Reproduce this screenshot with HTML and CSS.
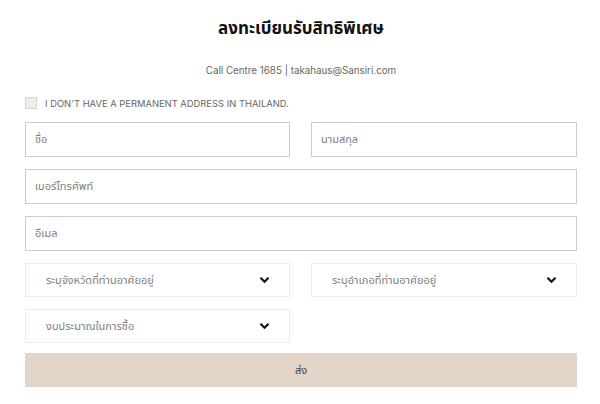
FILE: index.html
```html
<!DOCTYPE html>
<html lang="th">
<head>
<meta charset="utf-8">
<link rel="stylesheet" href="styles.css">
</head>
<body>
<div class="page">
  <h1 class="title">ลงทะเบียนรับสิทธิพิเศษ</h1>
  <p class="contact">Call Centre 1685 | takahaus@Sansiri.com</p>
  <form class="form">
    <label class="check-row">
      <span class="checkbox"></span>
      <span class="check-label">I DON'T HAVE A PERMANENT ADDRESS IN THAILAND.</span>
    </label>
    <div class="grid">
      <div class="field"><span class="ph">ชื่อ</span></div>
      <div class="field"><span class="ph">นามสกุล</span></div>
      <div class="field wide"><span class="ph">เบอร์โทรศัพท์</span></div>
      <div class="field wide"><span class="ph">อีเมล</span></div>
      <div class="select"><span class="ph sel">ระบุจังหวัดที่ท่านอาศัยอยู่</span>
        <svg class="chev" width="11" height="8" viewBox="0 0 11 8"><path d="M1.5 1.8 L5.5 5.8 L9.5 1.8" fill="none" stroke="#111" stroke-width="2.2"/></svg></div>
      <div class="select"><span class="ph sel">ระบุอำเภอที่ท่านอาศัยอยู่</span>
        <svg class="chev" width="11" height="8" viewBox="0 0 11 8"><path d="M1.5 1.8 L5.5 5.8 L9.5 1.8" fill="none" stroke="#111" stroke-width="2.2"/></svg></div>
      <div class="select"><span class="ph sel">งบประมาณในการซื้อ</span>
        <svg class="chev" width="11" height="8" viewBox="0 0 11 8"><path d="M1.5 1.8 L5.5 5.8 L9.5 1.8" fill="none" stroke="#111" stroke-width="2.2"/></svg></div>
      <button type="button" class="submit wide">ส่ง</button>
    </div>
  </form>
</div>
</body>
</html>
```
FILE: styles.css
```css
* { box-sizing: border-box; }
html, body { margin: 0; padding: 0; background: #fff; }
body { font-family: "Noto Sans", "Noto Sans Thai", "DejaVu Sans", sans-serif; color: #222; }
.page { width: 600px; padding: 14px 23px 0 25px; }
.title {
  margin: 0;
  text-align: center;
  font-size: 17px;
  font-weight: 700;
  line-height: 28px;
  color: #111;
}
.contact {
  margin: 21px 0 0;
  text-align: center;
  font-family: "Inter", "Noto Sans", sans-serif;
  font-size: 9.8px;
  line-height: 16px;
  color: #666;
}
.form { margin-top: 18px; }
.check-row { display: flex; align-items: center; gap: 8px; height: 12px; }
.checkbox {
  width: 12px; height: 12px;
  border: 1px solid #d4d4d4;
  background: #eee;
}
.check-label {
  font-family: "Inter", "Noto Sans", sans-serif;
  font-size: 9.4px;
  color: #666;
}
.grid {
  margin-top: 13px;
  display: grid;
  grid-template-columns: 265px 266px;
  column-gap: 21px;
  row-gap: 12px;
}
.wide { grid-column: 1 / -1; }
.field {
  height: 35px;
  border: 1px solid #cdcdcd;
  display: flex;
  align-items: center;
  padding-left: 9px;
}
.ph { font-size: 11px; color: #808080; }
.select {
  height: 34px;
  border: 1px solid #ececec;
  display: flex;
  align-items: center;
  justify-content: space-between;
  padding: 0 19px 0 20px;
}
.chev { display: block; }
.submit {
  height: 34px;
  margin-top: -2px;
  border: 0;
  background: #e2d6c8;
  font-family: "Noto Sans", "Noto Sans Thai", sans-serif;
  font-size: 11px;
  color: #444;
}
```
